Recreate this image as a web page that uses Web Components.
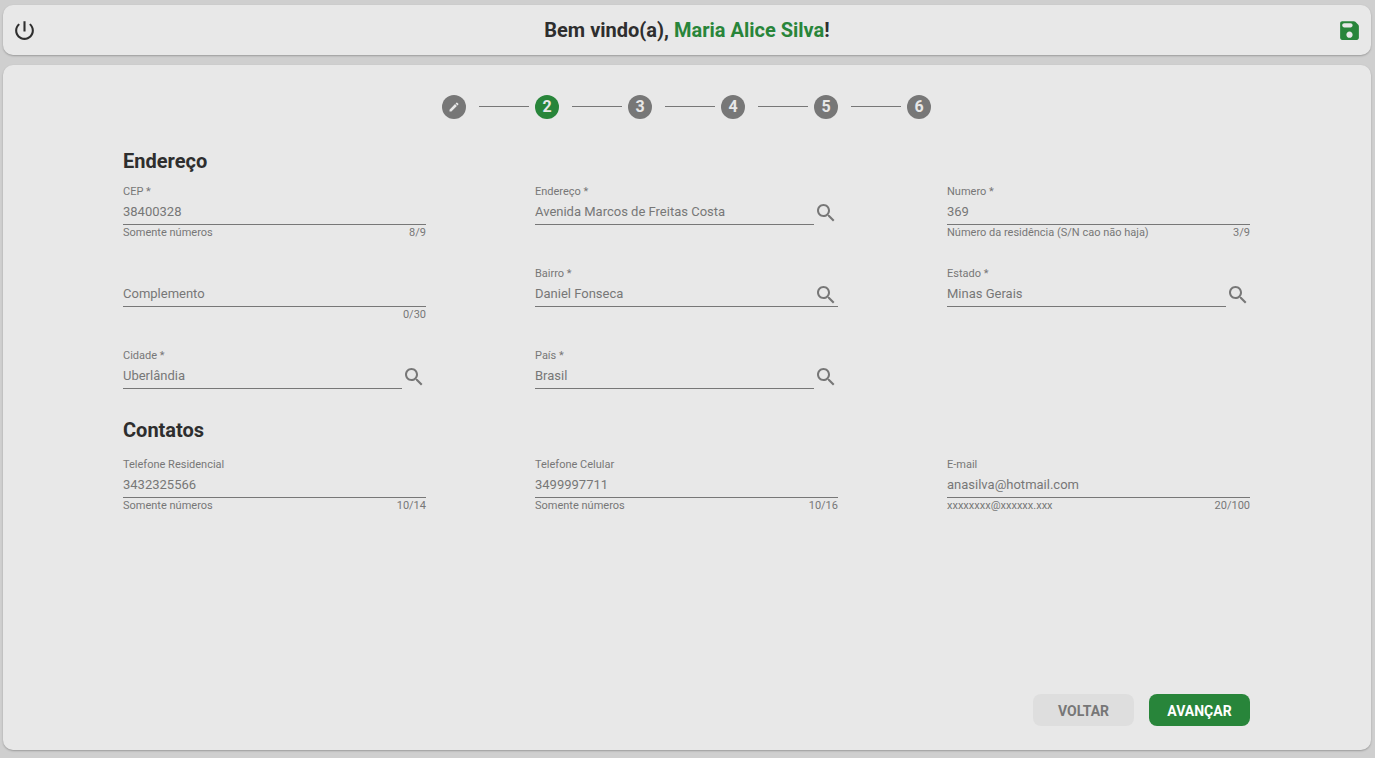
<!DOCTYPE html>
<html lang="pt-BR">
<head>
<meta charset="utf-8">
<meta name="viewport" content="width=device-width, initial-scale=1">
<title>Cadastro</title>
<style>
  html { background: #cfcfcf; }
  body {
    margin: 0;
    font-family: Roboto, "Liberation Sans", sans-serif;
    --green: #28853a;
    --gray: #777;
    --dark: #2e2e2e;
    --surface: #e8e8e8;
  }
</style>
</head>
<body>
<signup-page></signup-page>

<script>
const ICONS = {
  power: "M13 3h-2v10h2V3zm4.83 2.17l-1.42 1.42C17.99 7.86 19 9.81 19 12c0 3.87-3.13 7-7 7s-7-3.13-7-7c0-2.19 1.01-4.14 2.58-5.42L6.17 5.17C4.23 6.82 3 9.26 3 12c0 4.97 4.03 9 9 9s9-4.03 9-9c0-2.74-1.23-5.18-3.17-6.83z",
  save: "M17.59 3.59c-.38-.38-.89-.59-1.42-.59H5c-1.11 0-2 .9-2 2v14c0 1.1.9 2 2 2h14c1.1 0 2-.9 2-2V7.83c0-.53-.21-1.04-.59-1.41l-2.82-2.83zM12 19c-1.66 0-3-1.34-3-3s1.34-3 3-3 3 1.34 3 3-1.34 3-3 3zm1-10H7c-1.1 0-2-.9-2-2s.9-2 2-2h6c1.1 0 2 .9 2 2s-.9 2-2 2z",
  search: "M15.5 14h-.79l-.28-.27C15.41 12.59 16 11.11 16 9.5 16 5.91 13.09 3 9.5 3S3 5.91 3 9.5 5.91 16 9.5 16c1.61 0 3.09-.59 4.23-1.57l.27.28v.79l5 4.99L20.49 19l-4.99-5zm-6 0C7.01 14 5 11.99 5 9.5S7.01 5 9.5 5 14 7.01 14 9.5 11.99 14 9.5 14z",
  edit: "M3 17.25V21h3.75L17.81 9.94l-3.75-3.75L3 17.25zM20.71 7.04c.39-.39.39-1.02 0-1.41l-2.34-2.34c-.39-.39-1.02-.39-1.41 0l-1.83 1.83 3.75 3.75 1.83-1.83z",
};

// base: renders the markup returned by render() in an open shadow root
class BaseElement extends HTMLElement {
  connectedCallback() {
    if (this.shadowRoot) return;
    this.attachShadow({ mode: "open" });
    const template = document.createElement("template");
    template.innerHTML = this.render();
    this.shadowRoot.appendChild(template.content.cloneNode(true));
  }
  attr(name) {
    return this.getAttribute(name) || "";
  }
}

class AppIcon extends BaseElement {
  render() {
    return `
      <style>
        :host { display: block; width: 24px; height: 24px; }
        svg { display: block; width: 100%; height: 100%; fill: currentColor; }
      </style>
      <svg viewBox="0 0 24 24" aria-hidden="true"><path d="${ICONS[this.attr("name")]}"/></svg>`;
  }
}

class TopBar extends BaseElement {
  render() {
    return `
      <style>
        :host {
          display: flex;
          align-items: center;
          justify-content: space-between;
          height: 50px;
          padding: 0 9px;
          border-radius: 10px;
          background: var(--surface);
          box-shadow: 0 1px 2px rgba(0, 0, 0, .25);
        }
        button { padding: 0; border: 0; background: none; color: var(--dark); cursor: pointer; }
        .save { color: var(--green); }
        app-icon { width: 25px; height: 25px; }
        h1 { margin: 0; font-size: 20px; line-height: 24px; font-weight: 700; color: var(--dark); }
        ::slotted(*) { color: var(--green); }
      </style>
      <button type="button" aria-label="Sair"><app-icon name="power"></app-icon></button>
      <h1>Bem vindo(a), <slot></slot>!</h1>
      <button type="button" class="save" aria-label="Salvar"><app-icon name="save"></app-icon></button>`;
  }
}

class StepList extends BaseElement {
  render() {
    const total = Number(this.attr("total"));
    const current = Number(this.attr("current"));
    let steps = "";
    for (let i = 1; i <= total; i++) {
      const content = i < current ? `<app-icon name="edit"></app-icon>` : i;
      steps += `<li${i === current ? ' aria-current="step"' : ""}><span>${content}</span></li>`;
    }
    return `
      <style>
        :host { display: block; }
        ol { display: flex; justify-content: center; margin: 0; padding: 0; list-style: none; }
        li { display: flex; align-items: center; }
        li + li::before {
          content: "";
          width: 50px;
          height: 1px;
          margin: 0 6px 2px 13px;
          background: var(--gray);
        }
        span {
          display: flex;
          align-items: center;
          justify-content: center;
          width: 24px;
          height: 24px;
          border-radius: 50%;
          background: var(--gray);
          color: var(--surface);
          font-size: 16px;
          line-height: 24px;
          font-weight: 700;
        }
        [aria-current] span { background: var(--green); }
        app-icon { width: 12px; height: 12px; }
      </style>
      <ol>${steps}</ol>`;
  }
}

class FormSection extends BaseElement {
  render() {
    return `
      <style>
        :host { display: block; }
        h2 {
          margin: 0 0 var(--heading-gap, 11px);
          font-size: 20px;
          line-height: 24px;
          font-weight: 700;
          color: var(--dark);
        }
        .grid {
          display: grid;
          grid-template-columns: repeat(3, 1fr);
          gap: 25px 109px;
        }
      </style>
      <h2>${this.attr("heading")}</h2>
      <div class="grid"><slot></slot></div>`;
  }
}

class FormField extends BaseElement {
  render() {
    const label = this.attr("label");
    const floating = !this.hasAttribute("value");
    const icon = this.hasAttribute("search")
      ? `<button type="button" aria-label="Pesquisar ${label}"><app-icon name="search"></app-icon></button>`
      : "";
    return `
      <style>
        :host { display: block; min-width: 0; font-size: 11px; line-height: 16px; color: var(--gray); }
        label { display: block; height: 16px; }
        .row { display: flex; height: 25px; box-sizing: border-box; }
        :host([search="inside"]) .row { border-bottom: 1px solid var(--gray); }
        input {
          flex: 1;
          min-width: 0;
          box-sizing: border-box;
          padding: 0;
          border: 0;
          border-bottom: 1px solid var(--gray);
          border-radius: 0;
          outline: 0;
          background: none;
          color: inherit;
          font: 13px/24px Roboto, "Liberation Sans", sans-serif;
        }
        :host([search="inside"]) input { border: 0; }
        input::placeholder { color: inherit; opacity: 1; }
        button { align-self: flex-start; padding: 1px 0 0; border: 0; background: none; color: inherit; cursor: pointer; }
        .hint { display: flex; justify-content: space-between; height: 16px; }
      </style>
      <label for="field">${floating ? "" : label}</label>
      <div class="row">
        <input id="field" value="${this.attr("value")}" ${floating ? `placeholder="${label}" aria-label="${label}"` : ""}>
        ${icon}
      </div>
      <div class="hint"><span>${this.attr("hint")}</span><span>${this.attr("count")}</span></div>`;
  }
}

class ActionButton extends BaseElement {
  render() {
    return `
      <style>
        :host { display: block; }
        button {
          display: block;
          min-width: 101px;
          height: 32px;
          padding: 2px 16px 0;
          border: 0;
          border-radius: 8px;
          background: #dedede;
          color: var(--gray);
          font: 700 14px/30px Roboto, "Liberation Sans", sans-serif;
          text-transform: uppercase;
          cursor: pointer;
        }
        :host([primary]) button { background: var(--green); color: #fff; }
      </style>
      <button type="button"><slot></slot></button>`;
  }
}

class SignupPage extends BaseElement {
  render() {
    return `
      <style>
        :host {
          display: flex;
          flex-direction: column;
          gap: 10px;
          box-sizing: border-box;
          min-height: 100vh;
          padding: 5px 4px 8px 3px;
        }
        main {
          flex: 1;
          display: flex;
          flex-direction: column;
          padding: 30px 121px 24px 120px;
          border-radius: 10px;
          background: var(--surface);
          box-shadow: 0 1px 2px rgba(0, 0, 0, .25);
        }
        form-section { margin-top: 30px; }
        form-section + form-section { margin-top: 13px; --heading-gap: 15px; }
        footer { display: flex; justify-content: flex-end; gap: 15px; margin-top: auto; padding-top: 24px; }
      </style>
      <top-bar><span>Maria Alice Silva</span></top-bar>
      <main>
        <step-list total="6" current="2"></step-list>
        <form-section heading="Endereço">
          <form-field label="CEP *" value="38400328" hint="Somente números" count="8/9"></form-field>
          <form-field label="Endereço *" value="Avenida Marcos de Freitas Costa" search></form-field>
          <form-field label="Numero *" value="369" hint="Número da residência (S/N cao não haja)" count="3/9"></form-field>
          <form-field label="Complemento" count="0/30"></form-field>
          <form-field label="Bairro *" value="Daniel Fonseca" search="inside"></form-field>
          <form-field label="Estado *" value="Minas Gerais" search></form-field>
          <form-field label="Cidade *" value="Uberlândia" search></form-field>
          <form-field label="País *" value="Brasil" search></form-field>
        </form-section>
        <form-section heading="Contatos">
          <form-field label="Telefone Residencial" value="3432325566" hint="Somente números" count="10/14"></form-field>
          <form-field label="Telefone Celular" value="3499997711" hint="Somente números" count="10/16"></form-field>
          <form-field label="E-mail" value="anasilva@hotmail.com" hint="xxxxxxxx@xxxxxx.xxx" count="20/100"></form-field>
        </form-section>
        <footer>
          <action-button>Voltar</action-button>
          <action-button primary>Avançar</action-button>
        </footer>
      </main>`;
  }
}

customElements.define("app-icon", AppIcon);
customElements.define("top-bar", TopBar);
customElements.define("step-list", StepList);
customElements.define("form-section", FormSection);
customElements.define("form-field", FormField);
customElements.define("action-button", ActionButton);
customElements.define("signup-page", SignupPage);
</script>
</body>
</html>
